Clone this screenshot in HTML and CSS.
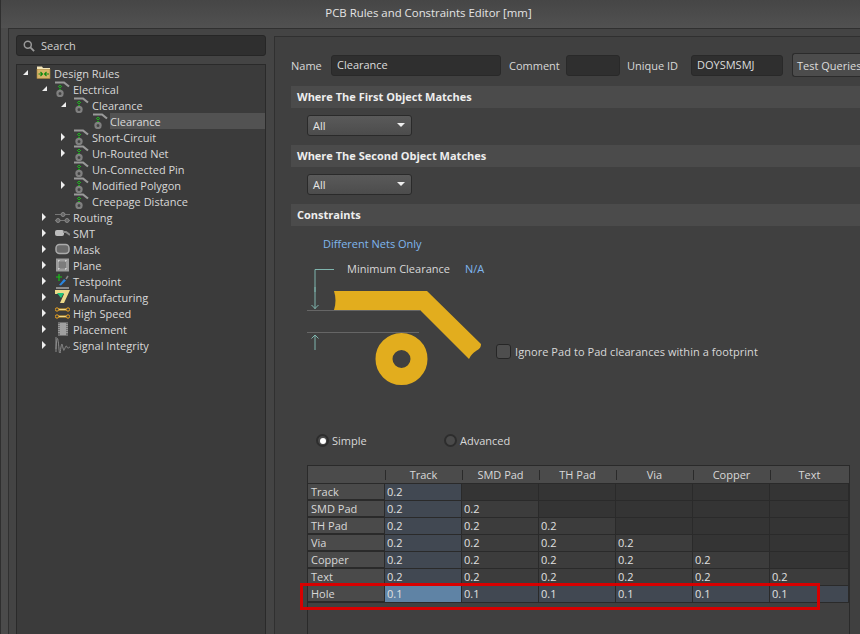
FILE: index.html
```html
<!DOCTYPE html>
<html lang="en">
<head>
<meta charset="utf-8">
<title>PCB Rules and Constraints Editor [mm]</title>
<link rel="stylesheet" href="styles.css">
</head>
<body>
<svg class="defs" width="0" height="0" aria-hidden="true">
  <symbol id="rule" viewBox="0 0 15 16">
    <path d="M0 1.500H9L14 5.500" fill="none" stroke="#9a9a9a" stroke-width="2.200"/>
    <circle cx="5" cy="12.500" r="2.600" fill="#444" stroke="#808080" stroke-width="2.200"/>
    <path d="M4 4h2v1H4zM3 5h1v1H3zM6 5h1v1H6zM4 6h2v1H4zM4 8h2v1H4z" fill="#1fb01f"/>
  </symbol>
</svg>
<header class="titlebar">PCB Rules and Constraints Editor [mm]</header>
<main class="main">
  <aside class="left">
    <div class="search">
      <svg class="search-icon" width="13" height="13" viewBox="0 0 13 13"><circle cx="5.200" cy="5.200" r="3.800" fill="none" stroke="#9a9a9a" stroke-width="1.600"/><path d="M8 8l4 4" stroke="#9a9a9a" stroke-width="2"/></svg>
      <span>Search</span>
    </div>
    <div class="tree">
      <div class="row l0"><i class="tw open"></i>
        <svg class="ico" viewBox="0 0 15 16"><path d="M1 1.500h5l1 1.500h7v2H1z" fill="#f4e6b8"/><rect x="1" y="4.500" width="13" height="9" fill="#d8b468" stroke="#a8843c" stroke-width=".6"/><path d="M2.500 9h4M4.500 7l2 2-2 2M13 9H8.500M10.500 7l-2 2 2 2" fill="none" stroke="#128a12" stroke-width="1.100"/></svg>
        <span>Design Rules</span></div>
      <div class="row l1"><i class="tw open"></i><svg class="ico"><use href="#rule"/></svg><span>Electrical</span></div>
      <div class="row l2"><i class="tw open"></i><svg class="ico"><use href="#rule"/></svg><span>Clearance</span></div>
      <div class="row l3"><i class="tw none"></i><svg class="ico"><use href="#rule"/></svg><span class="sel">Clearance</span></div>
      <div class="row l2"><i class="tw shut"></i><svg class="ico"><use href="#rule"/></svg><span>Short-Circuit</span></div>
      <div class="row l2"><i class="tw shut"></i><svg class="ico"><use href="#rule"/></svg><span>Un-Routed Net</span></div>
      <div class="row l2"><i class="tw none"></i><svg class="ico"><use href="#rule"/></svg><span>Un-Connected Pin</span></div>
      <div class="row l2"><i class="tw shut"></i><svg class="ico"><use href="#rule"/></svg><span>Modified Polygon</span></div>
      <div class="row l2"><i class="tw none"></i><svg class="ico"><use href="#rule"/></svg><span>Creepage Distance</span></div>
      <div class="row l1"><i class="tw shut"></i>
        <svg class="ico" viewBox="0 0 15 16"><path d="M0 5.500h15M0 11.500h15" stroke="#777" stroke-width="1"/><circle cx="8" cy="5.500" r="2" fill="#666" stroke="#888"/><circle cx="3" cy="11.500" r="2" fill="#666" stroke="#888"/><circle cx="12" cy="11.500" r="2" fill="#666" stroke="#888"/></svg>
        <span>Routing</span></div>
      <div class="row l1"><i class="tw shut"></i>
        <svg class="ico" viewBox="0 0 15 16"><rect x="0" y="5" width="9" height="6" rx="2" fill="#bdbdbd"/><path d="M8 7h3l4 3" fill="none" stroke="#8a8a8a" stroke-width="2"/></svg>
        <span>SMT</span></div>
      <div class="row l1"><i class="tw shut"></i>
        <svg class="ico" viewBox="0 0 15 16"><rect x="1" y="3.500" width="13" height="9" rx="3.500" fill="#6a6a6a" stroke="#aaa" stroke-width="1.500"/></svg>
        <span>Mask</span></div>
      <div class="row l1"><i class="tw shut"></i>
        <svg class="ico" viewBox="0 0 15 16"><rect x="1" y="1.500" width="13" height="13" fill="#9c9c9c"/><rect x="4" y="4.500" width="7" height="7" fill="#7c7c7c"/><path d="M3 4h2M10 4h2M3 12h2M10 12h2M4 3v2M11 3v2M4 11v2M11 11v2" stroke="#ddd" stroke-width="1" stroke-dasharray="1 1"/></svg>
        <span>Plane</span></div>
      <div class="row l1"><i class="tw shut"></i>
        <svg class="ico" viewBox="0 0 15 16"><path d="M4 1v7M1 4h6" stroke="#18c018" stroke-width="1.200"/><path d="M4 12l5-6 2 1.500-5 5z" fill="#2a86e0"/><path d="M11 6l2-3" stroke="#888" stroke-width="1.500"/><path d="M1 15h13" stroke="#ddd" stroke-width="1"/></svg>
        <span>Testpoint</span></div>
      <div class="row l1"><i class="tw shut"></i>
        <svg class="ico" viewBox="0 0 15 16"><path d="M0 1h15l-6 13H5l4-9H0z" fill="#ecd98a"/><path d="M2 4h7l-3 5z" fill="#22c27a"/></svg>
        <span>Manufacturing</span></div>
      <div class="row l1"><i class="tw shut"></i>
        <svg class="ico" viewBox="0 0 15 16"><path d="M1.500 4.500h12M1.500 11.500h12" stroke="#e8b030" stroke-width="2.200"/><path d="M4 4.500h7M4 11.500h7" stroke="#f0e0a0" stroke-width=".8"/><circle cx="2" cy="4.500" r="1.700" fill="#404040" stroke="#e8a020"/><circle cx="13" cy="4.500" r="1.700" fill="#404040" stroke="#e8a020"/><circle cx="2" cy="11.500" r="1.700" fill="#404040" stroke="#e8a020"/><circle cx="13" cy="11.500" r="1.700" fill="#404040" stroke="#e8a020"/></svg>
        <span>High Speed</span></div>
      <div class="row l1"><i class="tw shut"></i>
        <svg class="ico" viewBox="0 0 15 16"><rect x="3" y="1" width="10" height="14" fill="#6e6e6e"/><rect x="5" y="2" width="6" height="12" fill="#a0a0a0"/><path d="M3 3.500h2M3 5.500h2M3 7.500h2M3 9.500h2M3 11.500h2M11 3.500h2M11 5.500h2M11 7.500h2M11 9.500h2M11 11.500h2" stroke="#aaa" stroke-width=".7"/></svg>
        <span>Placement</span></div>
      <div class="row l1"><i class="tw shut"></i>
        <svg class="ico" viewBox="0 0 15 16"><path d="M1 0v15M1 12c1-16 2-12 3 0s1 3 2-2 1-3 2 1 1 2 2 0 1-3 2-1 1 1 3 0" fill="none" stroke="#8c8c8c" stroke-width="1"/></svg>
        <span>Signal Integrity</span></div>
    </div>
  </aside>
  <section class="right">
    <div class="namebar">
      <label class="lab name-lab">Name</label><div class="field f-name">Clearance</div>
      <label class="lab com-lab">Comment</label><div class="field f-com"></div>
      <label class="lab uid-lab">Unique ID</label><div class="field f-uid">DOYSMSMJ</div>
      <button class="btn">Test Queries</button>
    </div>
    <h2 class="sec">Where The First Object Matches</h2>
    <div class="combo-row"><div class="combo">All<i class="caret"></i></div></div>
    <h2 class="sec">Where The Second Object Matches</h2>
    <div class="combo-row"><div class="combo">All<i class="caret"></i></div></div>
    <h2 class="sec">Constraints</h2>
    <div class="canvas">
      <span class="link dn">Different Nets Only</span>
      <span class="mc">Minimum Clearance</span>
      <span class="link na">N/A</span>
      <svg class="draw" width="200" height="140" viewBox="0 0 200 140">
        <path d="M8 41V18.500H27" fill="none" stroke="#7fb5ae" stroke-width="1"/>
        <path d="M8 58V36M4.500 54l3.500 3.500 3.500-3.500" fill="none" stroke="#7fb5ae" stroke-width="1"/>
        <path d="M8 99V84M4.500 87.500l3.500-3.500 3.500 3.500" fill="none" stroke="#7fb5ae" stroke-width="1"/>
        <path d="M0 59.500H113M0 81.500H112" stroke="#666" stroke-width="1.200"/>
        <path d="M27 40H120L174 93C174 97 172 98 169 100C166 102 164 104 162 108L113 59H27C29 53 29 46 27 40Z" fill="#e2ad1e"/>
        <circle cx="94.500" cy="108" r="17.500" fill="none" stroke="#e2ad1e" stroke-width="17"/>
      </svg>
      <label class="check"><i class="box"></i>Ignore Pad to Pad clearances within a footprint</label>
      <label class="radio r1"><i class="dot on"></i>Simple</label>
      <label class="radio r2"><i class="dot"></i>Advanced</label>
    </div>
    <div class="grid">
      <div class="hd"></div><div class="hd">Track</div><div class="hd">SMD Pad</div><div class="hd">TH Pad</div><div class="hd">Via</div><div class="hd">Copper</div><div class="hd">Text</div>

      <div class="rh">Track</div><div class="c a">0.2</div><div class="c e"></div><div class="c e"></div><div class="c e"></div><div class="c e"></div><div class="c e"></div>
      <div class="rh">SMD Pad</div><div class="c a">0.2</div><div class="c">0.2</div><div class="c e"></div><div class="c e"></div><div class="c e"></div><div class="c e"></div>
      <div class="rh">TH Pad</div><div class="c a">0.2</div><div class="c">0.2</div><div class="c">0.2</div><div class="c e"></div><div class="c e"></div><div class="c e"></div>
      <div class="rh">Via</div><div class="c a">0.2</div><div class="c">0.2</div><div class="c">0.2</div><div class="c">0.2</div><div class="c e"></div><div class="c e"></div>
      <div class="rh">Copper</div><div class="c a">0.2</div><div class="c">0.2</div><div class="c">0.2</div><div class="c">0.2</div><div class="c">0.2</div><div class="c e"></div>
      <div class="rh">Text</div><div class="c a">0.2</div><div class="c">0.2</div><div class="c">0.2</div><div class="c">0.2</div><div class="c">0.2</div><div class="c">0.2</div>
      <div class="rh">Hole</div><div class="c s">0.1</div><div class="c a">0.1</div><div class="c a">0.1</div><div class="c a">0.1</div><div class="c a">0.1</div><div class="c a">0.1</div>
    </div>
    <div class="redbox"></div>
  </section>
</main>
</body>
</html>
```
FILE: styles.css
```css
* { box-sizing: border-box; }
html, body { margin: 0; height: 634px; overflow: hidden; }
body {
  width: 860px;
  background: #4b4b4b;
  border-left: 1px solid #2f2f2f;
  font: 11px "Open Sans", "Noto Sans", sans-serif;
  color: #d8d8d8;
  display: flex;
  flex-direction: column;
}
.defs { position: absolute; }
.titlebar {
  height: 28px;
  flex: none;
  background: linear-gradient(#464646, #515151);
  color: #e4e4e4;
  font-size: 11.4px;
  text-align: center;
  line-height: 26px;
  padding-right: 4px;
}
.main {
  flex: 1;
  margin-left: 7px;
  border-top: 1px solid #303030;
  border-left: 1px solid #303030;
  background: #444;
  display: flex;
  min-height: 0;
}
.left {
  width: 265px;
  flex: none;
  padding: 6px 8px 0 7px;
  display: flex;
  flex-direction: column;
  gap: 8px;
}
.search {
  height: 21px;
  flex: none;
  background: #2f2f2f;
  border: 1px solid #262626;
  border-radius: 3px;
  display: flex;
  align-items: center;
  gap: 6px;
  padding-left: 6px;
  color: #d0d0d0;
}
.search-icon { width: 12px; height: 12px; }
.tree {
  flex: 1;
  background: #3b3b3b;
  border: 1px solid #2a2a2a;
  border-bottom: 0;
}
.row {
  height: 16px;
  display: flex;
  align-items: center;
  white-space: nowrap;
}
.l0 { padding-left: 5px; }
.l1 { padding-left: 24px; }
.l2 { padding-left: 43px; }
.l3 { padding-left: 62px; }
.tw { width: 14px; height: 16px; flex: none; position: relative; }
.ico { width: 15px; height: 16px; flex: none; margin-right: 3px; }
.open::after {
  content: "";
  position: absolute;
  left: 1px; top: 5px;
  border-style: solid;
  border-width: 0 0 5px 5px;
  border-color: transparent transparent #eee transparent;
}
.shut::after {
  content: "";
  position: absolute;
  left: 1px; top: 4px;
  border-style: solid;
  border-width: 4px 0 4px 4px;
  border-color: transparent transparent transparent #eee;
}
.sel {
  flex: 1;
  background: #525252;
  height: 16px;
  line-height: 18px;
  margin-left: -1px;
}
.right {
  margin-top: 7px;
  flex: 1;
  min-width: 0;
  background: #404040;
  border-top: 1px solid #303030;
  border-left: 1px solid #303030;
  padding-left: 16px;
  position: relative;
  overflow: hidden;
}
.namebar {
  height: 49px;
  display: flex;
  align-items: flex-start;
  white-space: nowrap;
  padding-top: 18px;
}
.lab { line-height: 22px; flex: none; }
.name-lab { width: 40px; }
.com-lab { width: 57px; margin-left: 8px; }
.uid-lab { width: 64px; margin-left: 7px; }
.field {
  height: 21px;
  flex: none;
  background: #2f2f2f;
  border: 1px solid #292929;
  border-radius: 3px;
  padding-left: 5px;
  line-height: 18px;
  color: #dcdcdc;
}
.f-name { width: 170px; }
.f-com { width: 54px; }
.f-uid { width: 92px; }
.btn {
  margin: -2px 0 0 9px;
  flex: none;
  width: 80px;
  height: 24px;
  background: #4c4c4c;
  border: 1px solid #2b2b2b;
  border-right: 0;
  border-radius: 3px 0 0 3px;
  color: #dcdcdc;
  font: inherit;
  text-align: left;
  padding: 0 0 0 4px;
}
.sec {
  margin: 0;
  height: 22px;
  background: #4b4b4b;
  color: #eee;
  font-size: 11px;
  font-weight: 700;
  line-height: 22px;
  padding-left: 6px;
}
.combo-row { height: 37px; padding: 7px 0 0 16px; }
.combo {
  width: 105px;
  height: 21px;
  background: linear-gradient(#5a5a5a, #4c4c4c);
  border: 1px solid #2a2a2a;
  border-radius: 3px;
  padding-left: 5px;
  line-height: 19px;
  color: #e6e6e6;
  position: relative;
}
.caret {
  position: absolute;
  right: 6px; top: 7px;
  border-style: solid;
  border-width: 4px 4px 0 4px;
  border-color: #eee transparent transparent transparent;
}
.canvas { position: relative; height: 239px; }
.canvas > * { position: absolute; white-space: nowrap; }
.link { color: #7fb6ee; }
.dn { left: 32px; top: 10px; }
.mc { left: 56px; top: 35px; color: #d8d8d8; }
.na { left: 174px; top: 35px; }
.draw { left: 16px; top: 25px; }
.check { left: 205px; top: 118px; display: flex; align-items: center; gap: 4px; letter-spacing: .06px; }
.box {
  width: 15px; height: 15px;
  background: #4e4e4e;
  border: 1px solid #262626;
  border-radius: 3px;
}
.radio { top: 207px; display: flex; align-items: center; gap: 3px; }
.r1 { left: 25px; }
.r2 { left: 153px; }
.dot {
  width: 13px; height: 13px;
  border-radius: 50%;
  background: #4a4a4a;
  border: 2px solid #2d2d2d;
  position: relative;
}
.dot.on::after {
  content: "";
  position: absolute;
  left: 1.500px; top: 1.500px;
  width: 6px; height: 6px;
  border-radius: 50%;
  background: #fff;
}
.grid {
  margin-left: 16px;
  width: 543px;
  height: 200px;
  border: 1px solid #2a2a2a;
  border-bottom: 0;
  display: grid;
  grid-template-columns: repeat(6, 77px) 1fr;
  grid-auto-rows: 17px;
  align-content: start;
  background: #404040;
}
.hd {
  height: 18px;
  background: #4b4b4b;
  text-align: center;
  line-height: 17px;
  position: relative;
  border-bottom: 1px solid #2a2a2a;
}
.hd + .hd::before {
  content: "";
  position: absolute;
  left: 0; top: 4px; height: 10px;
  border-left: 1px solid #2a2a2a;
}
.rh {
  background: #4a4a4a;
  padding-left: 3px;
  border-bottom: 2px solid #2a2a2a;
  border-right: 1px solid #2a2a2a;
  line-height: 16px;
  margin-top: 1px;
  height: 17px;
}
.c {
  margin-top: 1px;
  height: 17px;
  padding-left: 2px;
  border-bottom: 1px solid #2a2a2a;
  border-right: 1px solid #2a2a2a;
  background: #3c3c3c;
  line-height: 16px;
  color: #e0e0e0;
}
.e { background: #343434; }
.a { background: #414852; }
.s { background: #5f83a5; }
.redbox {
  position: absolute;
  left: 25px;
  top: 546px;
  width: 520px;
  height: 27px;
  border: 3px solid #d70000;
}
```
